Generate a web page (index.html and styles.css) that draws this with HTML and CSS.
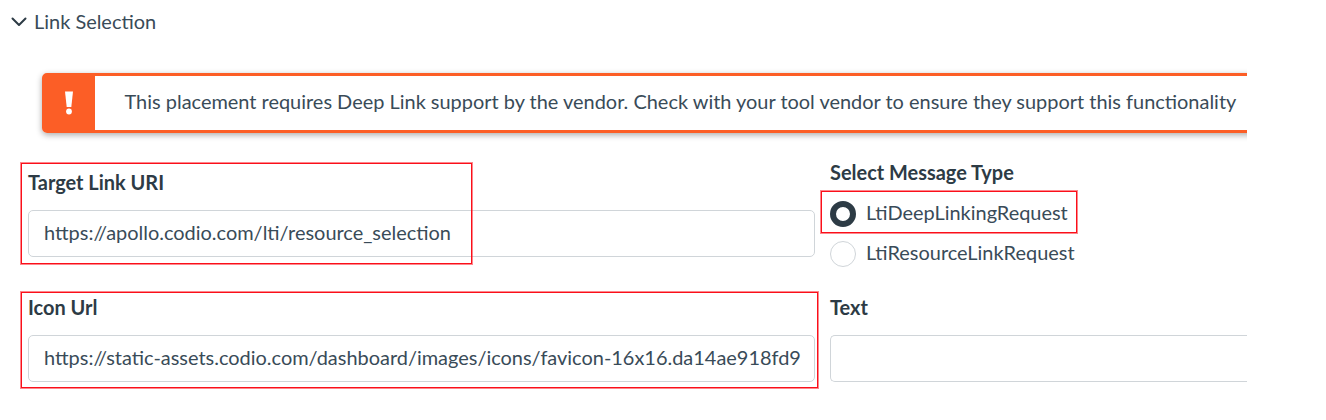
FILE: index.html
```html
<!DOCTYPE html>
<html lang="en">
<head>
<meta charset="utf-8">
<title>Link Selection</title>
<link rel="stylesheet" href="styles.css">
</head>
<body>
<main class="panel">
  <header class="toggle">
    <svg class="chevron" viewBox="0 0 16 10"><path d="M1.500 1.500 8 8l6.500-6.500"/></svg>
    <span>Link Selection</span>
  </header>
  <section class="alert">
    <div class="alert-icon"><svg viewBox="0 0 10 26"><path d="M1 1.500h8L7.300 17H2.700z"/><circle cx="5" cy="21.500" r="2.900"/></svg></div>
    <p class="alert-text">This placement requires Deep Link support by the vendor. Check with your tool vendor to ensure they support this functionality</p>
  </section>
  <form class="grid">
    <div class="field">
      <label class="label">Target Link URI</label>
      <div class="input"><span>https://apollo.codio.com/lti/resource_selection</span></div>
      <i class="mark mark-target"></i>
    </div>
    <div class="types">
      <div class="label">Select Message Type</div>
      <div class="option"><span class="radio checked"></span><span>LtiDeepLinkingRequest</span><i class="mark mark-deep"></i></div>
      <div class="option"><span class="radio"></span><span>LtiResourceLinkRequest</span></div>
    </div>
    <div class="field">
      <label class="label">Icon Url</label>
      <div class="input"><span>https://static-assets.codio.com/dashboard/images/icons/favicon-16x16.da14ae918fd9</span></div>
      <i class="mark mark-icon"></i>
    </div>
    <div class="field">
      <label class="label">Text</label>
      <div class="input open"></div>
    </div>
  </form>
</main>
</body>
</html>
```
FILE: styles.css
```css
* { box-sizing: border-box; }
body { margin: 0; background: #fff; color: #394b58; font: 19.94px/24px Lato, sans-serif; }
.panel { width: 1247px; height: 420px; overflow: hidden; }
.toggle { display: flex; align-items: center; gap: 7px; height: 42px; margin-bottom: 31px; padding-left: 11px; }
.chevron { width: 16px; height: 10px; margin-top: 2px; fill: none; stroke: #2d3b45; stroke-width: 2; stroke-linecap: round; stroke-linejoin: round; }
.alert { display: flex; height: 60px; margin: 0 -10px 0 42px; border: 3px solid #fc5e26; border-left-width: 2px; border-radius: 5px; box-shadow: 0 2px 6px #0005; }
.alert-icon { display: flex; width: 51px; align-items: center; justify-content: center; padding-right: 1px; background: #fc5e26; }
.alert-icon svg { width: 10px; height: 26px; fill: #fff; }
.alert-text { margin: 0; padding: 13px 0 0 29.500px; white-space: nowrap; }
.grid { display: grid; grid-template-columns: 787px 417px; grid-template-rows: 125px 125px; column-gap: 15px; margin: 0; padding: 37px 0 0 28px; }
.field { position: relative; }
.label { display: block; height: 24px; color: #2d3b45; font-weight: 700; }
.input { display: flex; align-items: flex-start; height: 47px; margin-top: 16px; padding: 9px 0 0 15px; border: 1px solid #d0d5d9; border-radius: 5px; white-space: nowrap; }
.open { border-right: 0; border-radius: 5px 0 0 5px; }
.types { margin-top: -10px; }
.types .label { margin-bottom: 15px; }
.option { position: relative; display: flex; align-items: flex-start; gap: 10px; height: 40px; padding-top: 1px; }
.radio { width: 26px; height: 26px; margin-top: 1px; border: 1px solid #d0d5d9; border-radius: 50%; }
.checked { border: 6.500px solid #2d3b45; }
.mark { position: absolute; border: 1px solid #fb0f1a; box-shadow: 0 0 0 1px #fb0f1a80; }
.mark-target { left: -7px; top: -7px; width: 451px; height: 101px; }
.mark-icon { left: -7px; top: -3px; width: 797px; height: 96px; }
.mark-deep { left: -9px; top: -8px; width: 256px; height: 42px; }
```
